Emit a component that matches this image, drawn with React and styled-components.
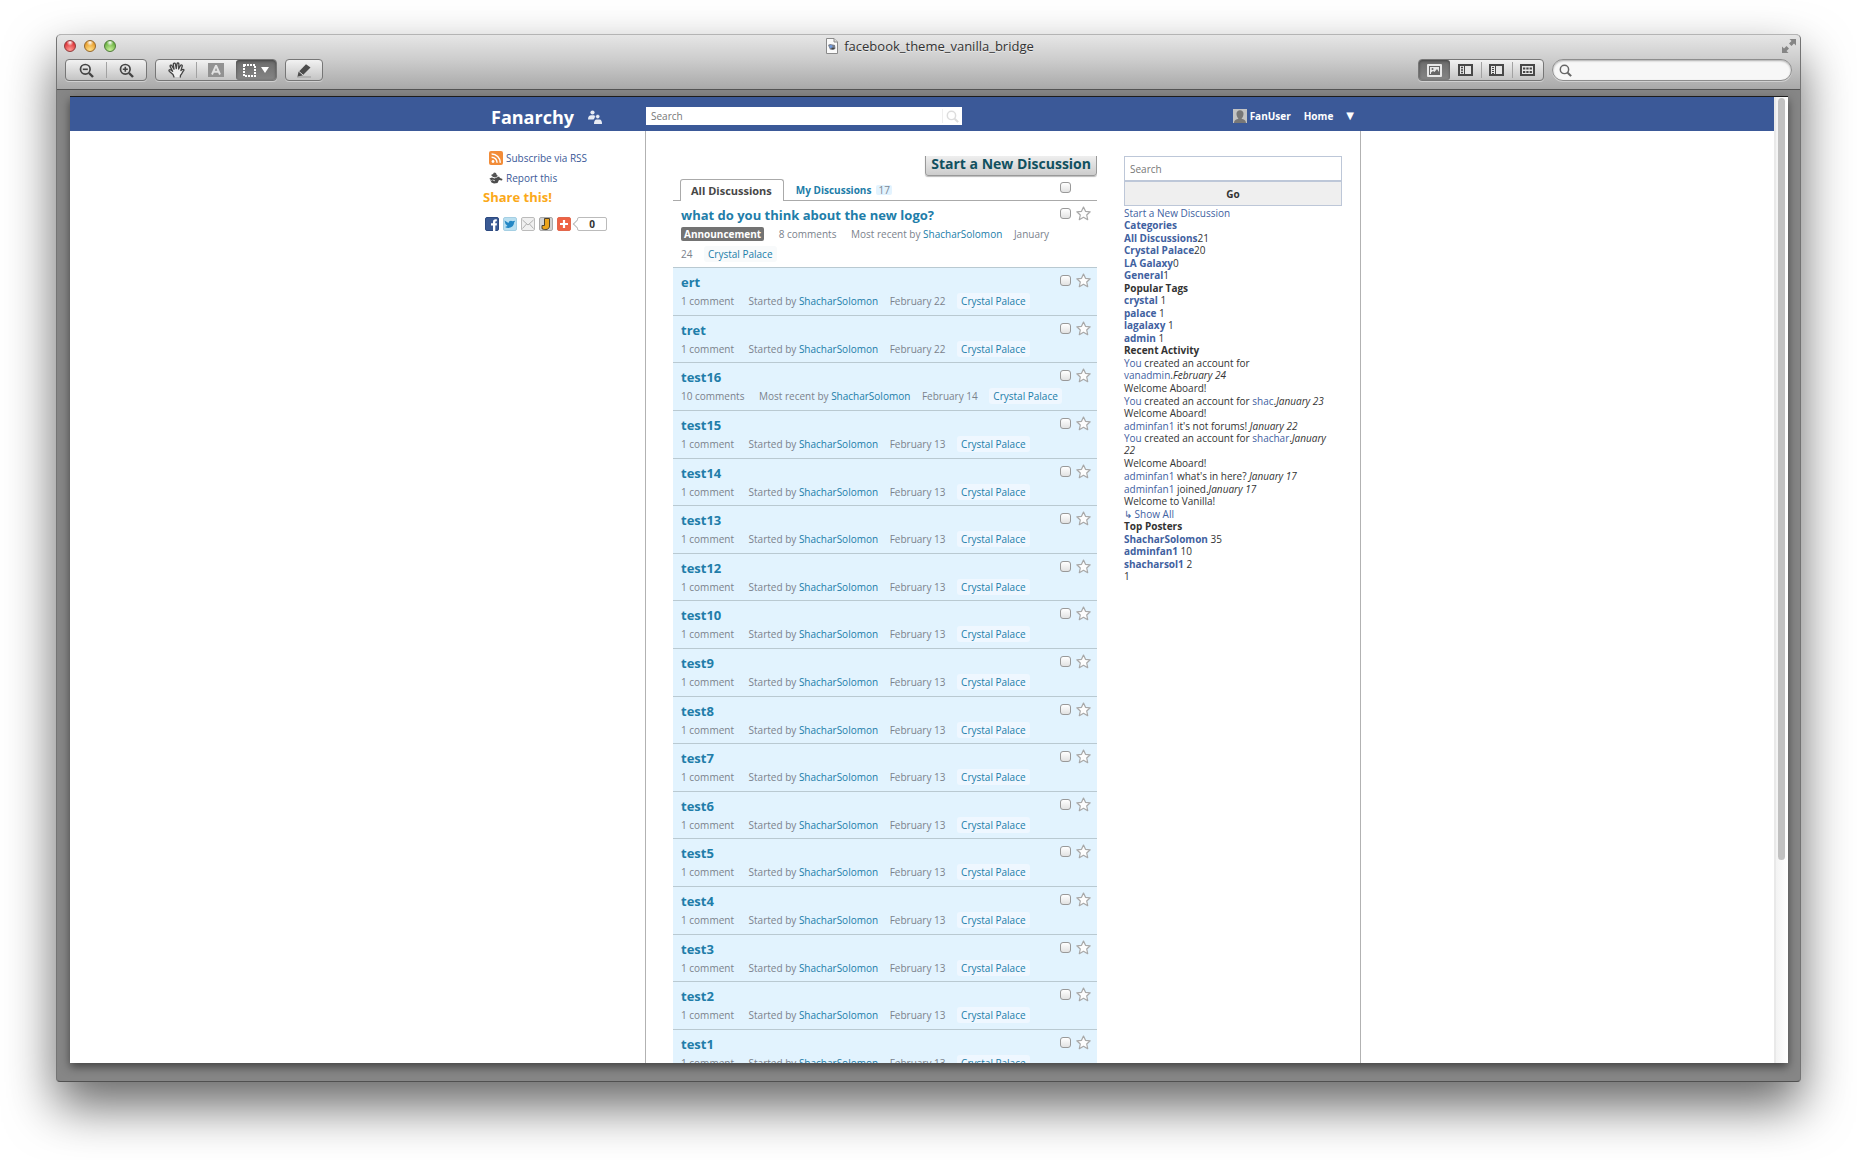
import React from "react";
import styled, { createGlobalStyle, css } from "styled-components";

const GlobalStyle = createGlobalStyle`
  *, *::before, *::after { box-sizing: border-box; }
  body {
    margin: 0;
    background: #fff;
    color: #333;
    font: 10px/12px "Lucida Grande", "Open Sans", "Noto Sans", sans-serif;
  }
  button, input { font: inherit; }
  a { color: #3b5998; text-decoration: none; }
  ul, h1, h2, h3, p { margin: 0; padding: 0; list-style: none; }
`;

/* ---------- window chrome ---------- */

const Desktop = styled.div`
  display: flex;
  height: 100vh;
  padding: 34px 56px 78px;
  overflow: hidden;
`;

const Window = styled.section`
  flex: 1;
  min-width: 0;
  display: flex;
  flex-direction: column;
  border: 1px solid #747474;
  border-top-color: #b4b4b4;
  border-bottom-color: #505050;
  border-radius: 5px 5px 4px 4px;
  background: #868686;
  box-shadow: 0 24px 50px rgba(0, 0, 0, 0.6);
`;

const Chrome = styled.header`
  height: 55px;
  border-bottom: 1px solid #545454;
  border-radius: 4px 4px 0 0;
  background: linear-gradient(#e6e6e6, #cdcdcd 45%, #a9a9a9);
`;

const TitleBar = styled.div`
  display: grid;
  grid-template-columns: 1fr auto 1fr;
  align-items: center;
  height: 22px;
  padding: 0 4px 0 7px;
`;

const Lights = styled.div`
  display: flex;
  gap: 8px;
`;

const Light = styled.button`
  width: 12px;
  height: 12px;
  padding: 0;
  border: 1px solid ${(p) => p.$edge};
  border-radius: 50%;
  background: radial-gradient(circle at 50% 15%, #fff 0, transparent 35%),
    radial-gradient(circle at 50% 90%, ${(p) => p.$glow}, ${(p) => p.$color} 70%);
`;

const WindowTitle = styled.h1`
  display: flex;
  align-items: center;
  gap: 6px;
  color: #333;
  font-size: 13px;
  font-weight: 400;
  line-height: 18px;
  text-shadow: 0 1px 0 rgba(255, 255, 255, 0.5);
`;

const PlainIconButton = styled.button`
  justify-self: end;
  display: flex;
  padding: 0;
  border: 0;
  background: none;
`;

const Tools = styled.div`
  display: flex;
  gap: 8px;
  padding: 2px 8px 0;
`;

const Spacer = styled.div`
  flex: 1;
`;

const Segments = styled.div`
  display: flex;
  height: 22px;
  border: 1px solid #767676;
  border-radius: 4px;
  background: linear-gradient(#f2f2f2, #c4c4c4);
  box-shadow: 0 1px 0 rgba(255, 255, 255, 0.4);
`;

const Segment = styled.button`
  display: flex;
  align-items: center;
  justify-content: center;
  gap: 5px;
  width: ${(p) => (p.$small ? 31 : p.$single ? 36 : 40)}px;
  padding: 0;
  border: 0;
  border-radius: 3px;
  background: none;
  position: relative;

  & + &::before {
    content: "";
    position: absolute;
    left: 0;
    top: 2px;
    bottom: 2px;
    width: 1px;
    background: #a2a2a2;
  }

  ${(p) =>
    p.$on &&
    css`
      background: linear-gradient(#6c6c6c, #858585);
      box-shadow: inset 0 1px 3px rgba(0, 0, 0, 0.4);
      && + &::before,
      &&::before { display: none; }
    `}
`;

const ToolSearch = styled.label`
  display: flex;
  align-items: center;
  gap: 4px;
  width: 240px;
  height: 22px;
  padding: 0 6px;
  border: 1px solid #8d8d8d;
  border-radius: 11px;
  background: #f7f7f7;
  box-shadow: inset 0 1px 2px rgba(0, 0, 0, 0.3), 0 1px 0 rgba(255, 255, 255, 0.4);
`;

const BareInput = styled.input`
  flex: 1;
  min-width: 0;
  padding: 0;
  border: 0;
  outline: 0;
  background: none;
  color: #333;
  &::placeholder { color: #777; opacity: 1; }
`;

const Viewport = styled.div`
  flex: 1;
  min-height: 0;
  display: flex;
  margin: 6px 12px 18px 13px;
  border-top: 1px solid #1d1d1d;
  background: #fff;
  box-shadow: 0 4px 9px rgba(0, 0, 0, 0.5);
`;

const Page = styled.div`
  flex: 1;
  min-width: 0;
  overflow: hidden;
`;

const Track = styled.div`
  width: 14px;
  padding: 1px 3px 0 2px;
  border-left: 2px solid #e9e9e9;
  background: linear-gradient(90deg, #f3f3f3, #fff);
`;

const Thumb = styled.div`
  width: 7px;
  height: 79%;
  border-radius: 4px;
  background: #c1c1c1;
`;

/* ---------- site header ---------- */

const SiteHeader = styled.header`
  background: #3b5998;
`;

const Columns = styled.div`
  display: grid;
  grid-template-columns: 162px 1fr;
  max-width: 878px;
  margin: 0 auto;
`;

const HeaderRow = styled(Columns)`
  align-items: center;
  height: 34px;
  padding-top: 4px;
`;

const Brand = styled.div`
  display: flex;
  align-items: center;
  gap: 14px;
  padding: 2px 0 0 8px;
`;

const BrandLink = styled.a`
  color: #fff;
  font-size: 18px;
  font-weight: 700;
  line-height: 24px;
`;

const HeaderMain = styled.div`
  display: flex;
  align-items: center;
  justify-content: space-between;
  padding: 0 7px 0 1px;
`;

const SiteSearch = styled.form`
  display: flex;
  width: 316px;
  height: 18px;
  padding-left: 5px;
  background: #fff;
`;

const SearchButton = styled.button`
  display: flex;
  align-items: center;
  justify-content: center;
  width: 20px;
  margin: 2px 0;
  padding: 0;
  border: 0;
  border-left: 1px solid #eee;
  background: none;
`;

const SiteNav = styled.nav`
  display: flex;
  align-items: center;
  gap: 13px;
`;

const NavLink = styled.a`
  display: flex;
  align-items: center;
  gap: 3px;
  color: #fff;
  font-weight: 700;
`;

const MenuButton = styled.button`
  padding: 0;
  border: 0;
  background: none;
  color: #fff;
  font-family: "DejaVu Sans", sans-serif;
  line-height: 12px;
`;

/* ---------- left column ---------- */

const LeftColumn = styled.aside`
  padding-top: 17px;
`;

const IconLink = styled.a`
  display: flex;
  align-items: center;
  gap: 3px;
  height: 20px;
  padding-left: 6px;
`;

const ShareTitle = styled.h2`
  color: #fba919;
  font-size: 13px;
  line-height: 18px;
`;

const ShareRow = styled.div`
  display: flex;
  align-items: center;
  gap: 4px;
  padding: 11px 0 0 2px;
`;

const ShareLink = styled.a`
  display: flex;
`;

const Count = styled.output`
  position: relative;
  width: 30px;
  margin-left: 2px;
  border: 1px solid #bbb;
  border-radius: 2px;
  font-weight: 700;
  line-height: 12px;
  text-align: center;

  &::before {
    content: "";
    position: absolute;
    left: -4px;
    top: 3px;
    width: 6px;
    height: 6px;
    border: 1px solid #bbb;
    border-width: 0 0 1px 1px;
    background: #fff;
    transform: rotate(45deg);
  }
`;

/* ---------- discussions ---------- */

const Main = styled.main`
  display: grid;
  grid-template-columns: 1fr 218px;
  gap: 27px;
  min-height: 100vh;
  padding: 25px 18px 0 27px;
  border: 1px solid #b2b2b2;
  border-width: 0 1px;
`;

const ButtonStrip = styled.div`
  display: flex;
  justify-content: flex-end;
  align-items: flex-end;
  height: 22px;
  padding-bottom: 2px;
  overflow: hidden;
`;

const StartButton = styled.button`
  flex: none;
  height: 30px;
  padding: 5px 5px 0;
  border: 1px solid #999;
  border-radius: 3px;
  background: linear-gradient(#fff, #ccc);
  box-shadow: 0 1px 1px #bbb;
  color: #10505f;
  font-size: 14px;
  font-weight: 700;
  line-height: 18px;
`;

const Tabs = styled.nav`
  display: flex;
  align-items: flex-end;
  gap: 12px;
  height: 23px;
  padding: 0 26px 0 7px;
  border-bottom: 1px solid #aaa;
`;

const ActiveTab = styled.a`
  height: 22px;
  margin-bottom: -1px;
  padding: 0 11px 0 10px;
  border: 1px solid #aaa;
  border-bottom: 0;
  border-radius: 3px 3px 0 0;
  background: #fff;
  color: #474747;
  font-size: 11px;
  font-weight: 700;
  line-height: 21px;
`;

const Tab = styled.a`
  display: flex;
  align-items: center;
  gap: 5px;
  height: 21px;
  color: #217da9;
  font-weight: 700;
`;

const Badge = styled.span`
  padding: 0 2px;
  border-radius: 2px;
  background: #e3f3fe;
  color: #7b8994;
  font-weight: 400;
  line-height: 10px;
`;

const TabsCheck = styled.div`
  align-self: center;
  display: flex;
  margin-left: auto;
  padding-bottom: 4px;
`;

const Check = styled.input.attrs({ type: "checkbox" })`
  appearance: none;
  width: 11px;
  height: 11px;
  margin: 0;
  border: 1px solid #999;
  border-radius: 3px;
  background: linear-gradient(#fff, #e2e2e2);
`;

const Row = styled.li`
  display: grid;
  grid-template-columns: 1fr auto;
  padding: 5px 6px 3px 8px;
  border-bottom: 1px solid #b9c9d1;
  background: ${(p) => (p.$plain ? "#fff" : "#e2f3fe")};
  &:nth-child(5n + 2),
  &:nth-child(5n + 4),
  &:nth-child(5n) { padding-bottom: 4px; }
`;

const RowTitle = styled.h3`
  font-size: 13px;
  line-height: 18px;
`;

const BlueLink = styled.a`
  color: #217da9;
`;

const RowTools = styled.div`
  display: flex;
  align-items: center;
  gap: 5px;
  height: 14px;
`;

const StarButton = styled(PlainIconButton)``;

const Meta = styled.p`
  grid-column: 1 / -1;
  padding-right: 23px;
  color: #7b828c;
  line-height: 20px;
`;

const MetaItem = styled.span`
  margin-right: ${(p) => (p.$wide ? 12 : 9)}px;
`;

const Announcement = styled(MetaItem)`
  padding: 0 3px;
  border-radius: 2px;
  background: #737373;
  color: #fff;
  font-weight: 700;
  line-height: 12px;
`;

const Tag = styled(BlueLink)`
  padding: 1px 4px;
  border-radius: 3px;
  background: ${(p) => (p.$plain ? "#f8fafb" : "#eff7ff")};
  white-space: nowrap;
`;

/* ---------- sidebar ---------- */

const SideForm = styled.form`
  display: flex;
  flex-direction: column;
`;

const SideInput = styled.input`
  width: 100%;
  height: 25px;
  padding: 0 5px;
  border: 1px solid #bdc7d8;
  outline: 0;
  &::placeholder { color: #777; opacity: 1; }
`;

const GoButton = styled.button`
  height: 25px;
  padding: 0;
  border: 1px solid #bdc7d8;
  background: #efefef;
  color: #333;
  font-weight: 700;
`;

const SideList = styled.ul`
  padding: 1px 10px 0 0;
  a { color: #41619f; }
`;

const SideItem = styled.li`
  line-height: 12px;
  &:nth-child(even),
  &:nth-child(13),
  &:nth-child(19) { padding-bottom: 1px; }
`;

const StrongLink = styled.a`
  font-weight: 700;
`;

/* ---------- drawings ---------- */

const Magnifier = ({ sign, color = "#444", size = 15 }) => (
  <svg width={size} height={size} viewBox="0 0 15 15" fill="none" stroke={color}>
    <circle cx="6.3" cy="6.3" r="4.8" strokeWidth="1.7" />
    <path d="M10 10l4 4" strokeWidth="2.4" />
    {sign && <path d={sign === "+" ? "M3.8 6.3h5M6.3 3.8v5" : "M3.8 6.3h5"} strokeWidth="1.6" />}
  </svg>
);

const HandIcon = () => (
  <svg width="17" height="16" viewBox="0 0 17 16" fill="#eee" stroke="#444" strokeWidth="1.3" strokeLinejoin="round" strokeLinecap="round">
    <path d="M6 15L5 12.500 1.500 9.500C.300 8.300 1.500 7.200 2.800 8L4.600 9.300 2.200 4.600C1.700 3.200 3.400 2.600 4 3.800L6 7.200 5.300 2.300C5.300.800 7.100.700 7.400 2L8.300 6.600 9 1.900C9.300.500 11 .800 10.900 2.200L10.600 7 12.500 3.500C13.200 2.300 14.600 3 14.200 4.300L12.900 8.600C14 6.900 16.500 7 15.800 8.500 14.600 9.300 14 12 12.500 13.300L12.300 15" />
  </svg>
);

const TextIcon = () => (
  <svg width="16" height="14" viewBox="0 0 16 14">
    <rect width="16" height="14" fill="#929292" />
    <path d="M4 11.500L7.800 3h.5L12 11.500M5.500 8.700h5" fill="none" stroke="#e2e2e2" strokeWidth="1.900" />
  </svg>
);

const SelectIcon = () => (
  <svg width="13" height="13" viewBox="0 0 13 13">
    <rect x="1" y="1" width="11" height="11" fill="none" stroke="#fff" strokeWidth="2" strokeDasharray="2 1" />
  </svg>
);

const DownIcon = () => (
  <svg width="8" height="6" viewBox="0 0 8 6">
    <path d="M0 0h8L4 6z" fill="#fff" />
  </svg>
);

const PencilIcon = () => (
  <svg width="16" height="15" viewBox="0 0 16 15">
    <path d="M1 14h14" stroke="#999" />
    <path d="M1.500 13.500l1-4.500L10 1.200 14.500 4.500 6.500 12.500z" fill="#4b4b4b" />
    <path d="M3 8.500l4 3.500" stroke="#ddd" />
  </svg>
);

const Frame = ({ children }) => (
  <svg width="15" height="12" viewBox="0 0 15 12">
    <rect x="1" y="1" width="13" height="10" fill="#e6e6e6" stroke="#484848" strokeWidth="2" />
    {children}
  </svg>
);

const ImageIcon = () => (
  <svg width="15" height="13" viewBox="0 0 15 13">
    <rect width="15" height="13" rx="1" fill="#e8e8e8" />
    <rect x="2.500" y="2.500" width="10" height="8" fill="none" stroke="#666" />
    <path d="M4 10V8.500l2-1.500 1.500 1 2.500-3 2 3v2z" fill="#666" />
    <circle cx="5.500" cy="5" r="1" fill="#666" />
  </svg>
);

const ThumbsIcon = () => (
  <Frame>
    <path d="M6.500 1v10" stroke="#484848" />
    <path d="M3 3.500h2M3 6h2M3 8.500h2" stroke="#484848" strokeWidth="1.500" />
  </Frame>
);

const ListIcon = () => (
  <Frame>
    <path d="M6.500 1v10" stroke="#484848" />
    <path d="M3 3.500h2M3 5.500h2M3 7.500h2M3 9.500h2" stroke="#484848" />
  </Frame>
);

const GridIcon = () => (
  <Frame>
    <path d="M3 4.500h9M3 8h9" stroke="#484848" strokeWidth="2" strokeDasharray="2.300 1" />
  </Frame>
);

const FileIcon = () => (
  <svg width="12" height="16" viewBox="0 0 12 16">
    <path d="M.5.5h7.500L11.500 4v11.500H.5z" fill="#fafafa" stroke="#8a8a8a" />
    <path d="M8 .5V4h3.500" fill="#ddd" stroke="#8a8a8a" />
    <path d="M2 7l2-1 5 1 .5 3.500L7 12l-3-.5z" fill="#7b818d" />
    <circle cx="5" cy="8.500" r="1.500" fill="#6e9be4" />
    <path d="M5.500 10.500h3" stroke="#444" strokeWidth="1.500" />
  </svg>
);

const ExpandIcon = () => (
  <svg width="14" height="14" viewBox="0 0 14 14" fill="#858585">
    <path d="M7.500 0H14v6.500l-2-2L9.500 7 7 4.500 9.500 2zM6.500 14H0V7.500l2 2L4.500 7 7 9.500 4.500 12z" />
  </svg>
);

const FriendsIcon = () => (
  <svg width="14" height="14" viewBox="0 0 14 14" fill="#e7ebf4">
    <circle cx="4.500" cy="2.500" r="2.100" />
    <path d="M0 9.500c0-3 1.500-4.300 3-4.300h2.500c.8 0 1.300.5 1.500 1.200C6.800 8 6.200 8.500 5.500 9.500z" />
    <circle cx="9.700" cy="6.600" r="2.100" stroke="#3b5998" strokeWidth=".5" />
    <path d="M6 14c0-3 1-4.500 2.500-4.500h3c1.700 0 2.500 1.500 2.500 4.500z" />
  </svg>
);

const Avatar = () => (
  <svg width="14" height="14" viewBox="0 0 14 14">
    <rect width="14" height="14" fill="#c3c3c3" />
    <path d="M1 14c0-3 2.500-3.500 4.500-4.200C4 8 3.500 6.500 3.500 4.500 3.500 2.500 5 1.200 7 1.200s3.500 1.300 3.500 3.300c0 2-.5 3.500-2 5.300C10.500 10.500 13 11 13 14z" fill="#777" />
  </svg>
);

const RssIcon = () => (
  <svg width="14" height="14" viewBox="0 0 14 14">
    <rect width="14" height="14" rx="2" fill="#f28c38" />
    <circle cx="4" cy="10.500" r="1.400" fill="#fff" />
    <path d="M2.600 6.200c3 0 5.500 2.300 5.500 5.600M2.600 3c4.800 0 8.700 3.700 8.700 8.800" fill="none" stroke="#fff" strokeWidth="1.500" />
  </svg>
);

const ReportIcon = () => (
  <svg width="14" height="12" viewBox="0 0 14 12">
    <path d="M2 3l2-1 1-1.500 2 .5.5 1.500L9 4 6.500 5.500 4 5z" fill="#555" />
    <path d="M.5 6.500L3 5.500l2.500 1L10 4.500l1 1.500 2.500 1-.5 1.500-3-.5L8.500 11 5 11.500 2.500 10.500z" fill="#4c4c4c" />
    <path d="M3.500 8l2.500.8M1.500 7.500l1 1.500" stroke="#ccc" />
  </svg>
);

const Tile = ({ fill, edge, children }) => (
  <svg width="14" height="14" viewBox="0 0 14 14">
    <rect x=".5" y=".5" width="13" height="13" rx="1.500" fill={fill} stroke={edge} />
    {children}
  </svg>
);

const StarIcon = () => (
  <svg width="15" height="15" viewBox="0 0 15 15">
    <path d="M7.500 1l2 4.300 4.700.5-3.500 3.200 1 4.700-4.200-2.400-4.200 2.400 1-4.700L.800 5.800l4.700-.5z" fill="#fdfdfd" stroke="#a8a8a8" strokeWidth="1.200" strokeLinejoin="round" />
  </svg>
);

const share = [
  ["Facebook", <Tile fill="#3a5a94" edge="#2d4a80"><path d="M8 14V8.500H6V6.300h2V5c0-2 1-3 3.800-2.700v2c-1.200 0-1.500 0-1.500 1v1h1.700l-.3 2.200h-1.400V14z" fill="#fff" /></Tile>],
  ["Twitter", <Tile fill="#b9dff0" edge="#a5cfe3"><path d="M1.500 3.500l4 2.500c.3-2 2.500-3 4-1.700l2.700-.5-1.200 2c0 4-5 6.500-9 4.200l2.500-1-2-2z" fill="#2387c5" /></Tile>],
  ["Email", <Tile fill="#f0f0f0" edge="#bbb"><path d="M1.500 3l5.500 5 5.500-5M1.500 11.500l4-4.500m7 4.500l-4-4.500" fill="none" stroke="#b0b0b0" /></Tile>],
  ["Bookmark", <Tile fill="#d3d3d3" edge="#aaa"><path d="M5.500 1.500h5V9c0 3.500-4 4.500-7.500 2.700V8.500h2.500z" fill="#eba41c" stroke="#4d4230" /></Tile>],
  ["More", <Tile fill="#ee6244" edge="#e2674c"><path d="M7 3v8M3 7h8" stroke="#fff" strokeWidth="2.200" /></Tile>],
];

/* ---------- content ---------- */

const discussions = [
  { title: "what do you think about the new logo?", announcement: true, comments: "8 comments", verb: "Most recent by", date: "January 24" },
  { title: "ert", comments: "1 comment", verb: "Started by", date: "February 22" },
  { title: "tret", comments: "1 comment", verb: "Started by", date: "February 22" },
  { title: "test16", comments: "10 comments", verb: "Most recent by", date: "February 14" },
  ...[15, 14, 13, 12, 10, 9, 8, 7, 6, 5, 4, 3, 2, 1].map((n) => ({
    title: `test${n}`,
    comments: "1 comment",
    verb: "Started by",
    date: "February 13",
  })),
];

const Discussion = ({ item }) => (
  <Row $plain={item.announcement}>
    <RowTitle>
      <BlueLink href="#discussion">{item.title}</BlueLink>
    </RowTitle>
    <RowTools>
      <Check aria-label={`Select ${item.title}`} />
      <StarButton type="button" aria-label={`Bookmark ${item.title}`}>
        <StarIcon />
      </StarButton>
    </RowTools>
    <Meta>
      {item.announcement && <><Announcement $wide>Announcement</Announcement>{" "}</>}
      <MetaItem $wide>{item.comments}</MetaItem>{" "}
      <MetaItem>
        {item.verb} <BlueLink href="#user">ShacharSolomon</BlueLink>
      </MetaItem>{" "}
      <MetaItem>{item.date}</MetaItem>{" "}
      <Tag href="#category" $plain={item.announcement}>Crystal Palace</Tag>
    </Meta>
  </Row>
);

const A = ({ children }) => <a href="#side">{children}</a>;
const S = ({ children }) => <StrongLink href="#side">{children}</StrongLink>;

const sideItems = [
  <A>Start a New Discussion</A>,
  <S>Categories</S>,
  <><S>All Discussions</S>21</>,
  <><S>Crystal Palace</S>20</>,
  <><S>LA Galaxy</S>0</>,
  <><S>General</S>1</>,
  <strong>Popular Tags</strong>,
  <><S>crystal</S> 1</>,
  <><S>palace</S> 1</>,
  <><S>lagalaxy</S> 1</>,
  <><S>admin</S> 1</>,
  <strong>Recent Activity</strong>,
  <><A>You</A> created an account for <A>vanadmin</A>.<em>February 24</em></>,
  <>Welcome Aboard!</>,
  <><A>You</A> created an account for <A>shac</A>.<em>January 23</em></>,
  <>Welcome Aboard!</>,
  <><A>adminfan1</A> it's not forums! <em>January 22</em></>,
  <><A>You</A> created an account for <A>shachar</A>.<em>January 22</em></>,
  <>Welcome Aboard!</>,
  <><A>adminfan1</A> what's in here? <em>January 17</em></>,
  <><A>adminfan1</A> joined.<em>January 17</em></>,
  <>Welcome to Vanilla!</>,
  <A>↳ Show All</A>,
  <strong>Top Posters</strong>,
  <><S>ShacharSolomon</S> 35</>,
  <><S>adminfan1</S> 10</>,
  <><S>shacharsol1</S> 2</>,
  <>1</>,
];

export default function App() {
  return (
    <>
      <GlobalStyle />
      <Desktop>
        <Window>
          <Chrome>
            <TitleBar>
              <Lights>
                <Light type="button" aria-label="Close" $color="#e0383c" $glow="#ff9c94" $edge="#8e3b3c" />
                <Light type="button" aria-label="Minimize" $color="#e9a02f" $glow="#ffe08a" $edge="#94672c" />
                <Light type="button" aria-label="Zoom" $color="#6fb545" $glow="#c8f09a" $edge="#4f7a39" />
              </Lights>
              <WindowTitle>
                <FileIcon />
                facebook_theme_vanilla_bridge
              </WindowTitle>
              <PlainIconButton type="button" aria-label="Full screen">
                <ExpandIcon />
              </PlainIconButton>
            </TitleBar>
            <Tools>
              <Segments>
                <Segment type="button" aria-label="Zoom out"><Magnifier sign="-" /></Segment>
                <Segment type="button" aria-label="Zoom in"><Magnifier sign="+" /></Segment>
              </Segments>
              <Segments>
                <Segment type="button" aria-label="Move"><HandIcon /></Segment>
                <Segment type="button" aria-label="Text"><TextIcon /></Segment>
                <Segment type="button" aria-label="Select" $on><SelectIcon /><DownIcon /></Segment>
              </Segments>
              <Segments>
                <Segment type="button" aria-label="Annotate" $single><PencilIcon /></Segment>
              </Segments>
              <Spacer />
              <Segments>
                <Segment type="button" aria-label="Content only" $small $on><ImageIcon /></Segment>
                <Segment type="button" aria-label="Thumbnails" $small><ThumbsIcon /></Segment>
                <Segment type="button" aria-label="Table of contents" $small><ListIcon /></Segment>
                <Segment type="button" aria-label="Contact sheet" $small><GridIcon /></Segment>
              </Segments>
              <ToolSearch>
                <Magnifier color="#666" size={13} />
                <BareInput type="text" aria-label="Search document" />
              </ToolSearch>
            </Tools>
          </Chrome>

          <Viewport>
            <Page>
              <SiteHeader>
                <HeaderRow>
                  <Brand>
                    <BrandLink href="#home">Fanarchy</BrandLink>
                    <FriendsIcon />
                  </Brand>
                  <HeaderMain>
                    <SiteSearch>
                      <BareInput type="text" placeholder="Search" aria-label="Search site" />
                      <SearchButton type="submit" aria-label="Search">
                        <Magnifier color="#ddd" size={13} />
                      </SearchButton>
                    </SiteSearch>
                    <SiteNav>
                      <NavLink href="#profile"><Avatar />FanUser</NavLink>
                      <NavLink href="#home">Home</NavLink>
                      <MenuButton type="button">▼</MenuButton>
                    </SiteNav>
                  </HeaderMain>
                </HeaderRow>
              </SiteHeader>

              <Columns>
                <LeftColumn>
                  <IconLink href="#rss"><RssIcon />Subscribe via RSS</IconLink>
                  <IconLink href="#report"><ReportIcon />Report this</IconLink>
                  <ShareTitle>Share this!</ShareTitle>
                  <ShareRow>
                    {share.map(([name, icon]) => (
                      <ShareLink key={name} href="#share" aria-label={name}>{icon}</ShareLink>
                    ))}
                    <Count>0</Count>
                  </ShareRow>
                </LeftColumn>
                <Main>
                  <div>
                    <ButtonStrip>
                      <StartButton type="button">Start a New Discussion</StartButton>
                    </ButtonStrip>
                    <Tabs>
                      <ActiveTab href="#all">All Discussions</ActiveTab>
                      <Tab href="#mine">My Discussions <Badge>17</Badge></Tab>
                      <TabsCheck><Check aria-label="Select all discussions" /></TabsCheck>
                    </Tabs>
                    <ul>
                      {discussions.map((item) => (
                        <Discussion key={item.title} item={item} />
                      ))}
                    </ul>
                  </div>
                  <aside>
                    <SideForm>
                      <SideInput type="text" placeholder="Search" aria-label="Search discussions" />
                      <GoButton type="submit">Go</GoButton>
                    </SideForm>
                    <SideList>
                      {sideItems.map((content, i) => (
                        <SideItem key={i}>{content}</SideItem>
                      ))}
                    </SideList>
                  </aside>
                </Main>
              </Columns>
            </Page>
            <Track>
              <Thumb />
            </Track>
          </Viewport>
        </Window>
      </Desktop>
    </>
  );
}
